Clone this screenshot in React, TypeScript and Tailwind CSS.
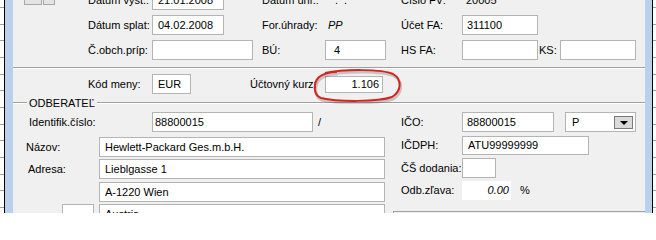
import React from "react";

function Ticks({ width }: { width: string }) {
  return (
    <div className={`flex shrink-0 flex-col bg-white pt-[7px] ${width}`}>
      {Array.from({ length: 13 }).map((_, i) => (
        <div key={i} className="h-[16.67px] shrink-0 border-t border-[#a0a0a0]" />
      ))}
    </div>
  );
}

function Field({
  w,
  h = "h-[20px]",
  children,
  className = "",
}: {
  w: string;
  h?: string;
  children?: React.ReactNode;
  className?: string;
}) {
  return (
    <div
      className={`flex shrink-0 items-center overflow-hidden whitespace-nowrap border border-[#b4b4b4] bg-white ${w} ${h} ${className}`}
    >
      {children}
    </div>
  );
}

function Separator() {
  return <div className="h-[2px] border-t border-b border-t-[#a0a0a0] border-b-white" />;
}

export default function App() {
  return (
    <div className="flex h-[213px] w-[656px] overflow-hidden bg-white font-['Liberation_Sans',Arial,sans-serif] text-[11px] leading-none text-black">
      <Ticks width="w-[4px]" />
      <div className="w-px shrink-0 bg-black" />
      <div className="w-[8px] shrink-0 bg-[#b9d1ea]" />

      {/* Form panel */}
      <div className="relative w-[632px] shrink-0 bg-[#f0f0f0]">
        {/* Document header */}
        <div className="-mt-[10px] flex flex-col gap-[5px]">
          <div className="grid h-[20px] grid-cols-[75px_64px_110px_63px_76px_61px_77px_21px_76px] items-center">
            <div className="flex gap-px self-end pb-[5px] pl-[11px]">
              <div className="h-[12px] w-[18px] border border-[#a8a8a8] bg-[#e4e4e4]" />
              <div className="h-[12px] w-[12px] border border-[#a8a8a8] bg-[#e4e4e4]" />
            </div>
            <span>Dátum vyst.:</span>
            <Field w="w-[72px]" className="pl-[5px]">21.01.2008</Field>
            <span>Dátum úhr.:</span>
            <span className="pl-[10px] tracking-[6px]">..</span>
            <span>Číslo FV:</span>
            <span className="pl-[4px]">20005</span>
          </div>
          <div className="grid h-[20px] grid-cols-[75px_64px_110px_63px_76px_61px_77px_21px_76px] items-center">
            <div />
            <span>Dátum splat:</span>
            <Field w="w-[72px]" className="pl-[5px]">04.02.2008</Field>
            <span>For.úhrady:</span>
            <span className="pl-[3px] italic">PP</span>
            <span>Účet FA:</span>
            <Field w="w-[76px]" className="pl-[4px]">311100</Field>
          </div>
          <div className="grid h-[20px] grid-cols-[75px_64px_110px_63px_76px_61px_77px_21px_76px] items-center">
            <div />
            <span>Č.obch.príp:</span>
            <Field w="w-[101px]" />
            <span>BÚ:</span>
            <Field w="w-[61px]" className="pl-[8px]">4</Field>
            <span>HS FA:</span>
            <Field w="w-[76px]" />
            <span>KS:</span>
            <Field w="w-[76px]" />
          </div>
        </div>

        <div className="mt-[7px]">
          <Separator />
        </div>

        {/* Currency */}
        <div className="mt-[5px] flex h-[20px] items-center">
          <div className="w-[75px] shrink-0" />
          <span className="w-[64px] shrink-0">Kód meny:</span>
          <Field w="w-[39px]" className="pl-[5px]">EUR</Field>
          <div className="w-[59px] shrink-0" />
          <span className="w-[75px] shrink-0">Účtovný kurz:</span>
          <Field w="w-[58px]" h="h-[17px]" className="mt-[1px] justify-end pr-[3px]">1.106</Field>
        </div>

        {/* ODBERATEĽ group */}
        <div className="mt-[3px] flex h-[12px] items-center">
          <div className="h-[2px] w-[14px] border-t border-b border-t-[#a0a0a0] border-b-white" />
          <span className="px-[2px]">ODBERATEĽ</span>
          <div className="h-[2px] flex-1 border-t border-b border-t-[#a0a0a0] border-b-white" />
        </div>

        <div className="flex">
          <div className="w-[380px] shrink-0">
            <div className="mt-[3px] flex h-[20px] items-center">
              <span className="w-[139px] shrink-0 pl-[16px]">Identifik.číslo:</span>
              <Field w="w-[161px]" className="pl-[2px]">88800015</Field>
              <span className="pl-[5px]">/</span>
            </div>
            <div className="mt-[5px] flex h-[20px] items-center">
              <span className="w-[86px] shrink-0 pl-[13px]">Názov:</span>
              <Field w="w-[286px]" className="pl-[5px]">Hewlett-Packard Ges.m.b.H.</Field>
            </div>
            <div className="mt-[2px] flex h-[20px] items-center">
              <span className="w-[86px] shrink-0 pl-[15px]">Adresa:</span>
              <Field w="w-[286px]" className="pl-[5px]">Lieblgasse 1</Field>
            </div>
            <div className="mt-[3px] flex h-[20px] items-center">
              <div className="w-[86px] shrink-0" />
              <Field w="w-[286px]" className="pl-[5px]">A-1220 Wien</Field>
            </div>
            <div className="mt-[2px] flex h-[20px] items-center">
              <div className="w-[49px] shrink-0" />
              <Field w="w-[32px]" />
              <div className="w-[5px] shrink-0" />
              <Field w="w-[286px]" className="pl-[5px]">Austria</Field>
            </div>
          </div>

          <div className="flex-1">
            <div className="mt-[3px] flex h-[20px] items-center">
              <span className="w-[69px] shrink-0 pl-[8px]">IČO:</span>
              <Field w="w-[92px]" className="pl-[4px]">88800015</Field>
              <div className="w-[11px] shrink-0" />
              <Field w="w-[71px]" className="relative pl-[6px]">
                P
                <div className="absolute top-[3px] right-[2px] flex h-[13px] w-[19px] items-center justify-center border border-[#7a7a7a] bg-[#dadada]">
                  <div className="h-0 w-0 border-t-[4px] border-r-[4px] border-l-[4px] border-t-black border-r-transparent border-l-transparent" />
                </div>
              </Field>
            </div>
            <div className="mt-[4px] flex h-[19px] items-center">
              <span className="w-[69px] shrink-0 pl-[8px]">IČDPH:</span>
              <Field w="w-[127px]" h="h-[19px]" className="pl-[5px]">ATU99999999</Field>
            </div>
            <div className="mt-[3px] flex h-[20px] items-center">
              <span className="w-[69px] shrink-0 pl-[8px]">ČŠ dodania:</span>
              <Field w="w-[34px]" />
            </div>
            <div className="mt-[3px] flex h-[19px] items-center">
              <span className="w-[69px] shrink-0 pl-[8px]">Odb.zľava:</span>
              <div className="flex h-[19px] w-[49px] shrink-0 items-center justify-end bg-white pr-[2px] italic">0.00</div>
              <span className="pl-[9px]">%</span>
            </div>
            <div className="mt-[11px] h-[20px] border-t border-l border-[#a0a0a0] bg-[#f0f0f0]" />
          </div>
        </div>

        {/* Red hand-drawn highlight */}
        <svg
          className="pointer-events-none absolute top-[68px] left-[299px]"
          width="90"
          height="36"
          viewBox="0 0 90 36"
        >
          <path
            d="M13 5 C32 1, 70 1, 81 6 C90 11, 90 23, 80 29 C66 34, 26 34, 9 30 C1 27, 1 15, 7 9 C11 6, 18 4, 25 4"
            fill="none"
            stroke="rgba(0,0,0,0.18)"
            strokeWidth="3"
            transform="translate(1 2)"
          />
          <path
            d="M13 5 C32 1, 70 1, 81 6 C90 11, 90 23, 80 29 C66 34, 26 34, 9 30 C1 27, 1 15, 7 9 C11 6, 18 4, 25 4"
            fill="none"
            stroke="#d8231d"
            strokeWidth="2"
          />
        </svg>
      </div>

      <div className="w-[7px] shrink-0 bg-[#b9d1ea]" />
      <div className="w-px shrink-0 bg-black" />
      <Ticks width="w-[3px]" />
    </div>
  );
}
